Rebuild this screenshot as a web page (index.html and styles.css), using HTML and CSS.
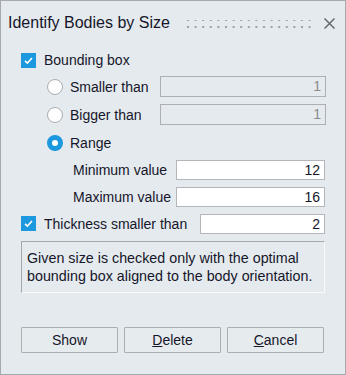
FILE: index.html
```html
<!DOCTYPE html>
<html>
<head>
<meta charset="utf-8">
<link rel="stylesheet" href="styles.css">
</head>
<body>
<div class="window">
  <div class="titlebar">
    <span class="title">Identify Bodies by Size</span>
    <svg class="grip" width="124" height="10" viewBox="0 0 124 10">
      <defs>
        <pattern id="dots" x="0" y="0" width="7.6" height="7" patternUnits="userSpaceOnUse">
          <rect x="0" y="0" width="2" height="2" fill="#9ea1a5"/>
        </pattern>
      </defs>
      <rect x="0" y="1" width="124" height="9" fill="url(#dots)"/>
    </svg>
    <svg class="close" width="11" height="11" viewBox="0 0 11 11">
      <path d="M0.5 0.5 L10.5 10.5 M10.5 0.5 L0.5 10.5" stroke="#666a6e" stroke-width="1.5" fill="none"/>
    </svg>
  </div>
  <div class="content">
    <div class="row row-bbox">
      <span class="check"><svg width="15" height="15" viewBox="0 0 15 15"><path d="M4 7.8 L6.4 10 L11 5" stroke="#fff" stroke-width="1.6" fill="none"/></svg></span>
      <span class="label">Bounding box</span>
    </div>
    <div class="row row-radio">
      <span class="radio"></span>
      <span class="label">Smaller than</span>
      <span class="field field-disabled field-radio">1</span>
    </div>
    <div class="row row-radio">
      <span class="radio"></span>
      <span class="label">Bigger than</span>
      <span class="field field-disabled field-radio">1</span>
    </div>
    <div class="row row-radio">
      <span class="radio radio-on"></span>
      <span class="label">Range</span>
    </div>
    <div class="row row-value">
      <span class="label">Minimum value</span>
      <span class="field field-value">12</span>
    </div>
    <div class="row row-value">
      <span class="label">Maximum value</span>
      <span class="field field-value">16</span>
    </div>
    <div class="row row-thick">
      <span class="check"><svg width="15" height="15" viewBox="0 0 15 15"><path d="M4 7.8 L6.4 10 L11 5" stroke="#fff" stroke-width="1.6" fill="none"/></svg></span>
      <span class="label">Thickness smaller than</span>
      <span class="field field-thick">2</span>
    </div>
    <div class="info">Given size is checked only with the optimal bounding box aligned to the body orientation.</div>
    <div class="buttons">
      <button class="btn">Show</button>
      <button class="btn"><u>D</u>elete</button>
      <button class="btn"><u>C</u>ancel</button>
    </div>
  </div>
</div>
</body>
</html>
```
FILE: styles.css
```css
html, body {
  margin: 0;
  padding: 0;
  background: #e4eaee;
}
.window {
  width: 346px;
  height: 375px;
  box-sizing: border-box;
  border: 1px solid #a6aaae;
  background: #e4eaee;
  font-family: "Liberation Sans", Arial, sans-serif;
  color: #16162a;
}
.titlebar {
  height: 43px;
  display: flex;
  align-items: center;
  padding-left: 7px;
  box-sizing: border-box;
}
.title {
  font-size: 16px;
  width: 160px;
  white-space: nowrap;
  margin-top: 1px;
}
.grip {
  margin-left: 19px;
  margin-top: 2px;
}
.close {
  margin-left: 13px;
  margin-top: 1px;
}
.content {
  display: flex;
  flex-direction: column;
  padding: 5px 20px 0 20px;
}
.row {
  display: flex;
  align-items: center;
  height: 21px;
  font-size: 14px;
}
.row-bbox {
  height: 22px;
}
.row-radio {
  padding-left: 26px;
  margin-top: 6px;
}
.row-bbox + .row-radio {
  margin-top: 5px;
}
.row-radio + .row-radio {
  margin-top: 7px;
}
.row-value {
  padding-left: 52px;
  margin-top: 6px;
}
.row-thick {
  margin-top: 6px;
}
.check {
  width: 15px;
  height: 15px;
  background: #1b98de;
  display: inline-block;
  flex: none;
}
.check svg {
  display: block;
}
.row-bbox .label,
.row-thick .label {
  margin-left: 8px;
}
.radio {
  width: 14px;
  height: 14px;
  border: 1px solid #a9adb1;
  border-radius: 50%;
  background: #fff;
  flex: none;
  box-sizing: content-box;
}
.radio-on {
  width: 6px;
  height: 6px;
  border: 5px solid #1b98de;
  background: #fff;
}
.row-radio .label {
  margin-left: 7px;
}
.field {
  margin-left: auto;
  height: 21px;
  box-sizing: border-box;
  border: 1px solid #b3b7bb;
  background: #fff;
  text-align: right;
  padding-right: 4px;
  line-height: 19px;
  font-size: 14px;
}
.field-disabled {
  background: #e4eaee;
  color: #8a8a8a;
  border-color: #acb0b4;
}
.field-radio {
  width: 166px;
  margin-right: -1px;
}
.field-value {
  width: 149px;
}
.row-value .field-value {
  height: 20px;
  line-height: 18px;
}
.field-thick {
  width: 125px;
  height: 20px;
  line-height: 18px;
}
.info {
  margin-top: 7px;
  height: 52px;
  box-sizing: border-box;
  border-top: 1px solid #a4a8ac;
  border-left: 1px solid #a4a8ac;
  border-right: 1px solid #f7f9fa;
  border-bottom: 1px solid #f7f9fa;
  padding: 8px 4px 0 5px;
  font-size: 14.3px;
  line-height: 17.5px;
}
.buttons {
  display: flex;
  gap: 6px;
  margin-top: 34px;
}
.btn {
  width: 97px;
  height: 26px;
  border: 1px solid #acafb2;
  border-radius: 1px;
  background: #e6ebee;
  font-family: "Liberation Sans", Arial, sans-serif;
  font-size: 14px;
  color: #16162a;
  padding: 0;
}
```
